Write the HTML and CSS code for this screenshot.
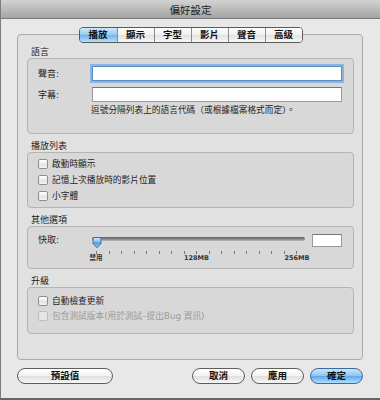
FILE: index.html
```html
<!DOCTYPE html>
<html>
	<head>
		<meta charset="utf-8">
		<title>偏好設定</title>
		<link rel="stylesheet" href="styles.css">
	</head>
	<body>
		<div class="window">
			<div class="titlebar">偏好設定</div>

			<div class="content">
				<div class="pane">
					<div class="tabs">
						<span class="tab active">播放</span>
						<span class="tab">顯示</span>
						<span class="tab">字型</span>
						<span class="tab">影片</span>
						<span class="tab">聲音</span>
						<span class="tab">高级</span>
					</div>

					<div class="group-label first">語言</div>
					<div class="group lang">
						<div class="field">
							<span class="label">聲音:</span>
							<div class="text focus"></div>
						</div>
						<div class="field">
							<span class="label">字幕:</span>
							<div class="text"></div>
						</div>
						<div class="hint">逗號分隔列表上的語言代碼（或根據檔案格式而定）。</div>
					</div>

					<div class="group-label">播放列表</div>
					<div class="group checks">
						<div class="check"><span class="box"></span>啟動時顯示</div>
						<div class="check"><span class="box"></span>記憶上次播放時的影片位置</div>
						<div class="check"><span class="box"></span>小字體</div>
					</div>

					<div class="group-label">其他選項</div>
					<div class="group other">
						<span class="label">快取:</span>
						<div class="slider">
							<div class="track-wrap">
								<div class="track"></div>
								<svg class="thumb" width="10" height="12" viewBox="0 0 10 12">
									<defs>
										<linearGradient id="aqua" x1="0" y1="0" x2="0" y2="1">
											<stop offset="0" stop-color="#d6ecfd"/>
											<stop offset="0.45" stop-color="#7fbaf0"/>
											<stop offset="0.5" stop-color="#4f9ae6"/>
											<stop offset="1" stop-color="#8fd0fb"/>
										</linearGradient>
									</defs>
									<path d="M1 2 Q1 0.5 2.5 0.5 H7.5 Q9 0.5 9 2 V6.5 L5 10.8 L1 6.5 Z" fill="url(#aqua)" stroke="#34659c" stroke-width="0.9"/>
								</svg>
							</div>
							<div class="ticks">
								<i></i><i></i><i></i><i></i><i></i><i></i><i></i><i></i><i></i>
								<i></i><i></i><i></i><i></i><i></i><i></i><i></i><i></i>
							</div>
							<div class="scale">
								<span style="left: 0%">禁用</span>
								<span style="left: 50%">128MB</span>
								<span style="left: 100%">256MB</span>
							</div>
						</div>
						<div class="text small"></div>
					</div>

					<div class="group-label">升級</div>
					<div class="group upgrade">
						<div class="check"><span class="box"></span>自動檢查更新</div>
						<div class="check disabled"><span class="box"></span>包含測試版本(用於測試–提出Bug 資訊)</div>
					</div>
				</div>

				<div class="buttons">
					<span class="button wide">預設值</span>
					<div class="right">
						<span class="button">取消</span>
						<span class="button">應用</span>
						<span class="button default">確定</span>
					</div>
				</div>
			</div>
		</div>
	</body>
</html>
```

FILE: styles.css
```css
body {margin: 0; padding: 0; font-family: "DejaVu Sans", "Noto Sans CJK TC", sans-serif; color: #1e1e1e;}

.window {display: flex; flex-direction: column; height: 400px; box-sizing: border-box; background-color: #e8e8e8; border-left: 1px solid #7d7d7d; border-bottom: 2px solid #666;}
.titlebar {height: 18px; line-height: 20px; overflow: hidden; text-align: center; font-size: 10.5px; color: #1a1a1a; border-bottom: 1px solid #7a7a7a; background: linear-gradient(#d2d2d2, #a4a4a4);}

.content {display: flex; flex-direction: column; padding: 15px 17px 0 16px;}

.pane {display: flex; flex-direction: column; height: 326px; box-sizing: border-box; padding: 0 8px 0 9px; border: 1px solid #aaa; border-radius: 4px; background-color: #e1e1e1;}

.tabs {display: flex; align-self: center; height: 16px; margin-top: -8px; box-sizing: border-box; border: 1px solid #5a5a5a; border-radius: 4px; overflow: hidden;}
.tab {width: 36px; line-height: 14px; text-align: center; font-size: 9.5px; font-weight: 600; color: #111; background: linear-gradient(#fefefe, #efefef 50%, #e2e2e2 50%, #f6f6f6);}
.tab + .tab {border-left: 1px solid #8c8c8c;}
.tab.active {width: 37px; background: linear-gradient(#cfe7fb, #95c9f1 50%, #6db2ec 50%, #b3e1fc);}

.group-label {margin: 6px 0 0 4px; line-height: 12px; font-size: 9px; color: #222;}
.group-label.first {margin-top: 3px;}
.group {border: 1px solid #b4b4b4; border-radius: 4px; background-color: #d8d8d8;}

.label {width: 54px; flex: none; font-size: 9px; line-height: 12px; box-sizing: border-box;}
.text {height: 15px; box-sizing: border-box; background-color: #fff; border: 1px solid #9a9a9a; border-top-color: #777;}
.text.focus {border-color: #5b8dc6; box-shadow: 0 0 0 2px #8db4df;}

.lang {padding: 7px 11px 18px 10px;}
.lang .field {display: flex; align-items: center;}
.lang .field + .field {margin-top: 6px;}
.lang .text {flex: 1;}
.hint {margin-top: 3px; padding-left: 53px; font-size: 8.7px; line-height: 10px;}

.check {display: flex; align-items: center; font-size: 8.7px; line-height: 12px;}
.check .box {width: 10px; height: 10px; box-sizing: border-box; margin: 0 4px 0 0; border: 1px solid #8e8e8e; border-radius: 2px; background: linear-gradient(#fff, #ececec 50%, #e0e0e0 50%, #f5f5f5);}
.check.disabled {color: #9b9b9b;}
.check.disabled .box {border-color: #bdbdbd; background: #e6e6e6;}

.checks {padding: 3px 0 3px 10px;}
.checks .check {height: 16px;}

.other {display: flex; align-items: flex-start; padding: 6px 11px 5px 10px;}
.other .label {margin-top: 1px;}
.slider {flex: 1;}
.track-wrap {position: relative; height: 12px;}
.track {margin-top: 4px; height: 4px; border-radius: 2px; background: linear-gradient(#5e5e5e, #8d8d8d 60%, #bcbcbc);}
.thumb {position: absolute; left: 0; top: 0;}
.ticks {display: flex; justify-content: space-between; height: 3px; margin: 2px 8px 0 4px;}
.ticks i {width: 1px; background-color: #777;}
.scale {position: relative; height: 9px; margin: 0 8px 0 4px;}
.scale span {position: absolute; top: 0; transform: translateX(-50%); font-size: 6.5px; line-height: 9px; font-weight: bold; color: #333; white-space: nowrap;}
.text.small {width: 30px; height: 13px; margin: 1px 0 0 7px;}

.upgrade {padding: 5px 0 10px 10px;}
.upgrade .check {height: 15px;}

.buttons {display: flex; margin-top: 8px;}
.buttons .right {display: flex; gap: 6px; margin-left: auto;}
.button {width: 53px; height: 16px; box-sizing: border-box; line-height: 14px; text-align: center; font-size: 9.5px; font-weight: 600; color: #111; border: 1px solid #5e5e5e; border-radius: 8px; background: linear-gradient(#ffffff, #f2f2f2 50%, #dedede 50%, #f7f7f7);}
.button.wide {width: 96px;}
.button.default {border-color: #3f6a9c; background: linear-gradient(#cbe5fb, #8cc3f0 50%, #5ba6ea 50%, #aee0fd);}
```
